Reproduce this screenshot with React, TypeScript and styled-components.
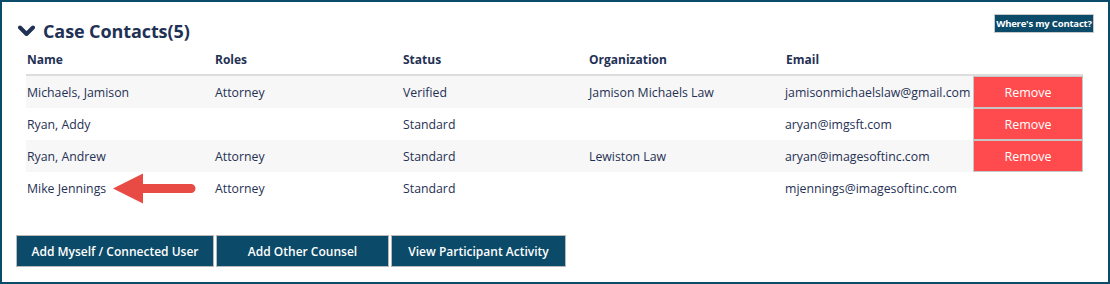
import * as React from 'react'
import styled, { createGlobalStyle } from 'styled-components'

const navy = '#1f3154'
const teal = '#0b4a69'
const red = '#ff4b4e'

const GlobalStyle = createGlobalStyle`
  html, body {
    margin: 0;
    padding: 0;
    background: #ffffff;
  }
  body {
    font-family: 'Open Sans', 'Liberation Sans', sans-serif;
    color: ${navy};
  }
`

const Panel = styled.div`
  width: 1110px;
  height: 284px;
  box-sizing: border-box;
  border: 2px solid ${teal};
  padding: 12px 14px 0 14px;
  display: flex;
  flex-direction: column;
`

const TitleBar = styled.div`
  display: flex;
  align-items: flex-start;
  justify-content: space-between;
  height: 30px;
`

const Title = styled.h2`
  display: flex;
  align-items: center;
  gap: 8px;
  margin: 5px 0 0 2px;
  font-size: 18px;
  font-weight: 700;
  line-height: 24px;
  color: ${navy};
  letter-spacing: -0.1px;
`

const SmallButton = styled.button`
  height: 19px;
  width: 100px;
  padding: 0;
  margin-top: 0;
  border: 1px solid #c8c8c8;
  background: ${teal};
  color: #ffffff;
  font-family: 'Open Sans', 'Liberation Sans', sans-serif;
  font-size: 9.5px;
  font-weight: 700;
  letter-spacing: -0.2px;
  cursor: pointer;
`

const Table = styled.div`
  margin-left: 10px;
  width: 1057px;
  display: grid;
  grid-template-columns: 188px 188px 186px 197px 188px 110px;
`

const HeadCell = styled.div`
  height: 30px;
  display: flex;
  align-items: center;
  padding-left: 1px;
  font-size: 12px;
  font-weight: 700;
  border-bottom: 2px solid #dddddd;
`

const Cell = styled.div<{ shaded: boolean }>`
  position: relative;
  height: 32px;
  display: flex;
  align-items: center;
  padding-left: 1px;
  font-size: 12.3px;
  white-space: nowrap;
  background: ${({ shaded }) => (shaded ? '#f7f7f7' : '#ffffff')};
`

const EmailCell = styled(Cell)`
  padding-left: 0;
`

const ButtonCell = styled.div`
  height: 32px;
  display: flex;
`

const RemoveButton = styled.button`
  width: 110px;
  height: 32px;
  box-sizing: border-box;
  border: 1px solid #c6c6c6;
  background: ${red};
  color: #ffffff;
  font-family: 'Open Sans', 'Liberation Sans', sans-serif;
  font-size: 12.5px;
  cursor: pointer;
`

const Actions = styled.div`
  display: flex;
  gap: 2px;
  margin-top: 31px;
`

const ActionButton = styled.button<{ w: number }>`
  width: ${({ w }) => w}px;
  height: 32px;
  box-sizing: border-box;
  border: 1px solid #b9b9b9;
  background: ${teal};
  color: #ffffff;
  font-family: 'Open Sans', 'Liberation Sans', sans-serif;
  font-size: 12px;
  font-weight: 600;
  cursor: pointer;
`

const Pointer = styled.svg`
  position: absolute;
  left: 87px;
  top: 1px;
`

function Chevron() {
  return (
    <svg width="17" height="12" viewBox="0 0 17 12">
      <path d="M2 2.5 L8.5 9 L15 2.5" fill="none" stroke={navy} strokeWidth="4" strokeLinecap="round" strokeLinejoin="round" />
    </svg>
  )
}

function Arrow() {
  return (
    <Pointer width="84" height="31" viewBox="0 0 84 31">
      <path d="M0 15.5 L30 0.5 L30 11 L78 11 A4.5 4.5 0 0 1 78 20 L30 20 L30 30.5 Z" fill="#e84b44" />
    </Pointer>
  )
}

type Contact = {
  name: string
  role: string
  status: string
  org: string
  email: string
  removable: boolean
  marked?: boolean
}

const contacts: Contact[] = [
  { name: 'Michaels, Jamison', role: 'Attorney', status: 'Verified', org: 'Jamison Michaels Law', email: 'jamisonmichaelslaw@gmail.com', removable: true },
  { name: 'Ryan, Addy', role: '', status: 'Standard', org: '', email: 'aryan@imgsft.com', removable: true },
  { name: 'Ryan, Andrew', role: 'Attorney', status: 'Standard', org: 'Lewiston Law', email: 'aryan@imagesoftinc.com', removable: true },
  { name: 'Mike Jennings', role: 'Attorney', status: 'Standard', org: '', email: 'mjennings@imagesoftinc.com', removable: false, marked: true },
]

export default function App() {
  return (
    <>
      <GlobalStyle />
      <Panel>
        <TitleBar>
          <Title>
            <Chevron />
            Case Contacts(5)
          </Title>
          <SmallButton>Where's my Contact?</SmallButton>
        </TitleBar>

        <Table>
          <HeadCell>Name</HeadCell>
          <HeadCell>Roles</HeadCell>
          <HeadCell>Status</HeadCell>
          <HeadCell>Organization</HeadCell>
          <HeadCell>Email</HeadCell>
          <HeadCell />
          {contacts.map((c, i) => {
            const shaded = i % 2 === 0
            return (
              <React.Fragment key={c.email}>
                <Cell shaded={shaded}>
                  {c.name}
                  {c.marked && <Arrow />}
                </Cell>
                <Cell shaded={shaded}>{c.role}</Cell>
                <Cell shaded={shaded}>{c.status}</Cell>
                <Cell shaded={shaded}>{c.org}</Cell>
                <EmailCell shaded={shaded}>{c.email}</EmailCell>
                <ButtonCell>
                  {c.removable && <RemoveButton>Remove</RemoveButton>}
                </ButtonCell>
              </React.Fragment>
            )
          })}
        </Table>

        <Actions>
          <ActionButton w={198}>Add Myself / Connected User</ActionButton>
          <ActionButton w={173}>Add Other Counsel</ActionButton>
          <ActionButton w={175}>View Participant Activity</ActionButton>
        </Actions>
      </Panel>
    </>
  )
}
